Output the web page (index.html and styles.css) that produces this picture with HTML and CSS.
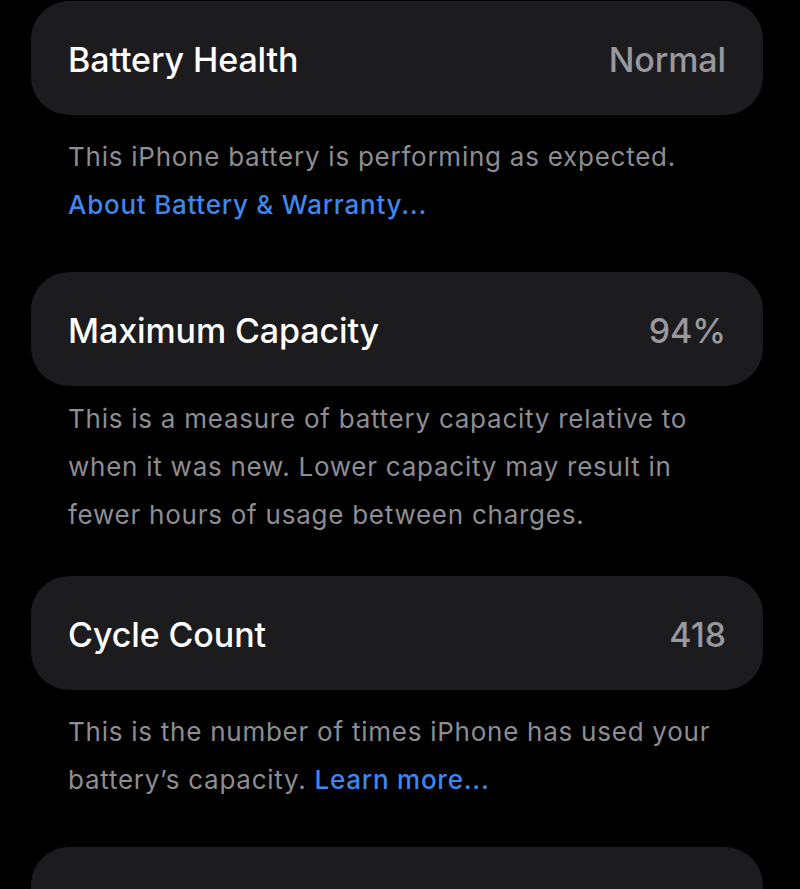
FILE: index.html
```html
<!DOCTYPE html>
<html lang="en">
<head>
<meta charset="utf-8">
<title>Battery Health</title>
<link rel="stylesheet" href="styles.css">
</head>
<body>
<main class="list">
  <section class="group group-first">
    <div class="card">
      <span class="label">Battery Health</span>
      <span class="value">Normal</span>
    </div>
    <div class="footer footer-a">
      <p>This iPhone battery is performing as expected.</p>
      <p><a class="link" href="#">About Battery &amp; Warranty...</a></p>
    </div>
  </section>
  <section class="group">
    <div class="card">
      <span class="label">Maximum Capacity</span>
      <span class="value">94%</span>
    </div>
    <div class="footer footer-b">
      <p>This is a measure of battery capacity relative to when it was new. Lower capacity may result in fewer hours of usage between charges.</p>
    </div>
  </section>
  <section class="group">
    <div class="card">
      <span class="label">Cycle Count</span>
      <span class="value">418</span>
    </div>
    <div class="footer footer-a">
      <p>This is the number of times iPhone has used your battery’s capacity. <a class="link" href="#">Learn more...</a></p>
    </div>
  </section>
  <section class="group">
    <div class="card"></div>
  </section>
</main>
</body>
</html>
```

FILE: styles.css
```css
html, body {
  margin: 0;
  padding: 0;
  background: #000;
  height: 100%;
  overflow: hidden;
}
body {
  font-family: Inter, "Noto Sans", sans-serif;
  color: #fff;
}
.list {
  display: flex;
  flex-direction: column;
  padding: 1px 37px 0 31px;
}
.card {
  background: #1c1c1e;
  border-radius: 38px;
  height: 114px;
  box-sizing: border-box;
  padding: 2px 37px 0 37px;
  display: flex;
  align-items: center;
  justify-content: space-between;
  font-size: 34px;
  font-weight: 500;
  letter-spacing: -0.1px;
}
.label { color: #fff; }
.value { color: #98989e; }
.footer {
  padding: 0 37px;
  font-size: 26px;
  line-height: 48px;
  color: #8d8d93;
  letter-spacing: 0.75px;
}
.footer p { margin: 0; }
.footer-a {
  padding-top: 18px;
  padding-bottom: 43px;
}
.footer-b {
  padding-top: 9px;
  padding-bottom: 37px;
}
.link {
  color: #3f86ef;
  text-decoration: none;
  font-weight: 500;
}
```
